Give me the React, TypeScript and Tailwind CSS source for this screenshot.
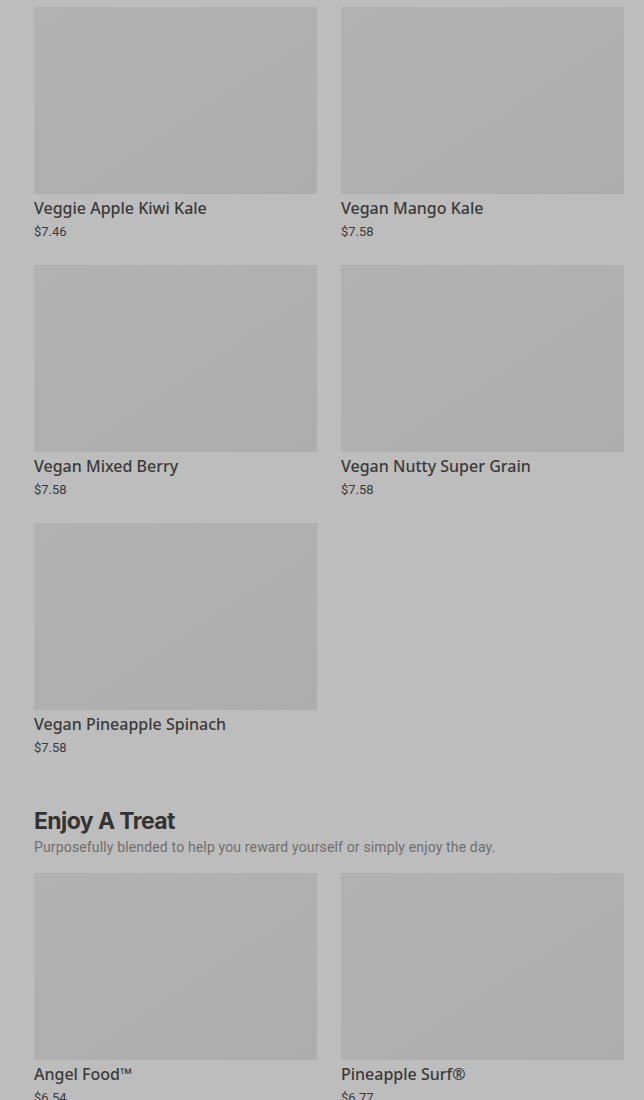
import React from 'react';

type Item = { name: string; price: string };

const smoothies: Item[] = [
  { name: 'Veggie Apple Kiwi Kale', price: '$7.46' },
  { name: 'Vegan Mango Kale', price: '$7.58' },
  { name: 'Vegan Mixed Berry', price: '$7.58' },
  { name: 'Vegan Nutty Super Grain', price: '$7.58' },
  { name: 'Vegan Pineapple Spinach', price: '$7.58' },
];

const treats: Item[] = [
  { name: 'Angel Food™', price: '$6.54' },
  { name: 'Pineapple Surf®', price: '$6.77' },
];

const Card: React.FC<{ item: Item }> = ({ item }) => (
  <div className="flex flex-col">
    <div className="h-[187px] w-full bg-gradient-to-br from-[#b2b2b2] to-[#adadad]" />
    <div className="mt-[3px] text-[16px] leading-[22px] font-medium text-[#3a3a3a] font-['Noto_Sans',sans-serif]">{item.name}</div>
    <div className="mt-[4px] text-[13px] leading-[18px] text-[#3a3a3a] font-['Roboto',sans-serif]">{item.price}</div>
  </div>
);

const App: React.FC = () => {
  return (
    <div className="min-h-[1100px] w-full bg-[#bdbdbd] overflow-hidden">
      <div className="pl-[34px] pr-[20px] pt-[7px]">
        <div className="grid grid-cols-2 gap-x-[24px] gap-y-[24px]">
          {smoothies.map(s => <Card key={s.name} item={s} />)}
        </div>

        <div className="mt-[50px]">
          <h2 className="text-[23px] leading-[28px] font-bold tracking-[-0.6px] text-[#333] font-['Inter',sans-serif]">Enjoy A Treat</h2>
          <p className="mt-[2px] text-[14px] leading-[20px] tracking-[0.15px] text-[#6f6f6f] font-['Roboto',sans-serif]">Purposefully blended to help you reward yourself or simply enjoy the day.</p>
        </div>

        <div className="mt-[16px] grid grid-cols-2 gap-x-[24px] gap-y-[24px]">
          {treats.map(s => <Card key={s.name} item={s} />)}
        </div>
      </div>
    </div>
  );
};

export default App;
